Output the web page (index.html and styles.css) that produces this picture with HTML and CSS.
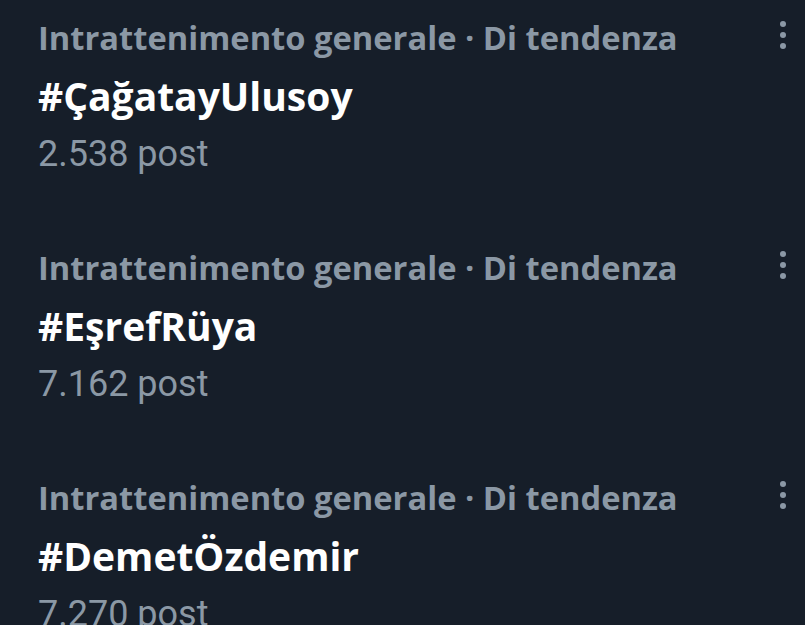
FILE: index.html
```html
<!DOCTYPE html>
<html lang="it">
<head>
    <meta charset="UTF-8">
    <title>Di tendenza</title>
    <link rel="stylesheet" href="styles.css">
</head>
<body>
    <div class="trends">
        <div class="trend">
            <div class="trend-text">
                <div class="trend-meta">Intrattenimento generale · Di tendenza</div>
                <div class="trend-name">#ÇağatayUlusoy</div>
                <div class="trend-count">2.538 post</div>
            </div>
            <div class="more"><span></span><span></span><span></span></div>
        </div>
        <div class="trend">
            <div class="trend-text">
                <div class="trend-meta">Intrattenimento generale · Di tendenza</div>
                <div class="trend-name">#EşrefRüya</div>
                <div class="trend-count">7.162 post</div>
            </div>
            <div class="more"><span></span><span></span><span></span></div>
        </div>
        <div class="trend">
            <div class="trend-text">
                <div class="trend-meta">Intrattenimento generale · Di tendenza</div>
                <div class="trend-name">#DemetÖzdemir</div>
                <div class="trend-count">7.270 post</div>
            </div>
            <div class="more"><span></span><span></span><span></span></div>
        </div>
    </div>
</body>
</html>
```
FILE: styles.css
```css
body {
    margin: 0;
    background-color: #161e29;
    font-family: "Open Sans", sans-serif;
    overflow: hidden;
}
.trends {
    padding: 9px 0 0 38px;
}
.trend {
    display: flex;
    justify-content: space-between;
    height: 230px;
}
.trend-meta {
    font-size: 32.7px;
    font-weight: 700;
    line-height: 58px;
    color: #8b98a5;
}
.trend-name {
    font-size: 39px;
    font-weight: 700;
    line-height: 58px;
    color: #ffffff;
}
.trend-count {
    font-family: Roboto, sans-serif;
    font-size: 36px;
    line-height: 58px;
    color: #8b98a5;
}
.more {
    display: flex;
    flex-direction: column;
    gap: 5px;
    padding: 12px 19px 0 0;
}
.more span {
    width: 6px;
    height: 6px;
    border-radius: 50%;
    background-color: #8b98a5;
}
```
